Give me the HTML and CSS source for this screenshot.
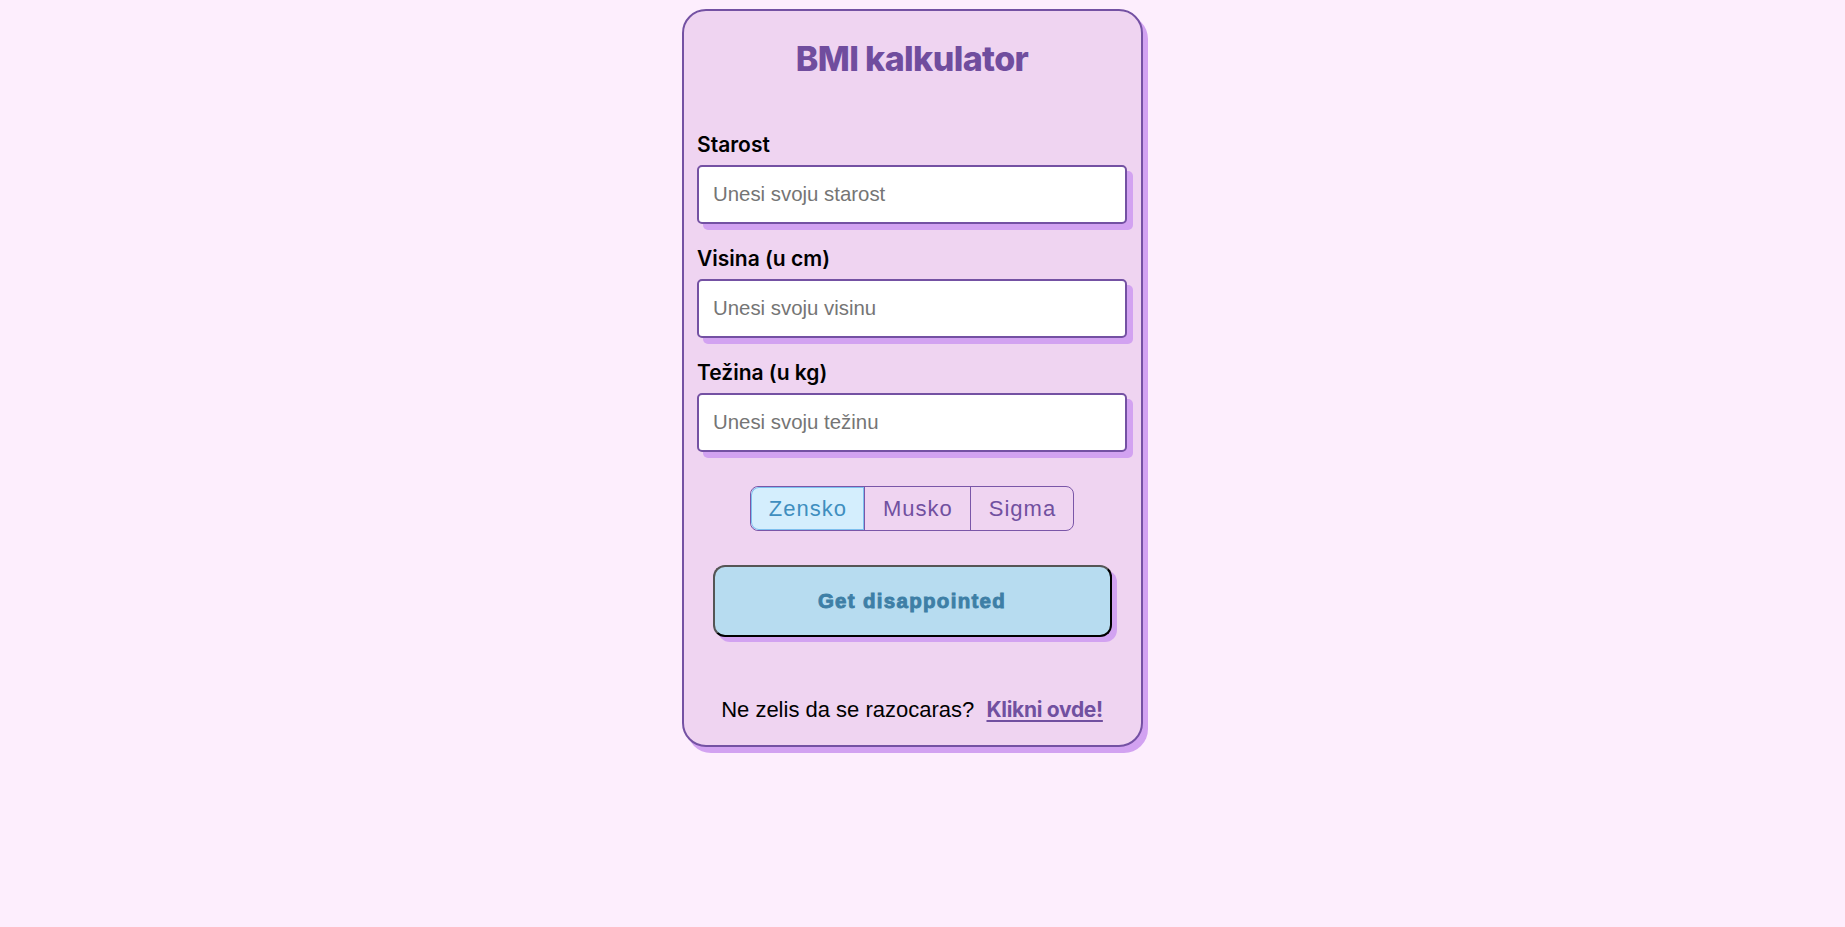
FILE: index.html
```html
<!DOCTYPE html>
<html lang="sr">
<head>
<meta charset="utf-8">
<title>BMI kalkulator</title>
<link rel="stylesheet" href="styles.css">
</head>
<body>
<main class="page">
  <section class="card">
    <h1 class="title">BMI kalkulator</h1>
    <form class="form">
      <div class="field">
        <label class="label" for="age">Starost</label>
        <input class="input" id="age" type="text" placeholder="Unesi svoju starost">
      </div>
      <div class="field">
        <label class="label" for="height">Visina (u cm)</label>
        <input class="input" id="height" type="text" placeholder="Unesi svoju visinu">
      </div>
      <div class="field field-last">
        <label class="label" for="weight">Težina (u kg)</label>
        <input class="input" id="weight" type="text" placeholder="Unesi svoju težinu">
      </div>
      <div class="toggle">
        <span class="seg seg-active">Zensko</span>
        <span class="seg">Musko</span>
        <span class="seg">Sigma</span>
      </div>
      <button class="btn" type="button">Get disappointed</button>
    </form>
    <p class="footer">Ne zelis da se razocaras?&nbsp; <a class="link" href="#">Klikni ovde!</a></p>
  </section>
</main>
</body>
</html>
```

FILE: styles.css
```css
html, body {
  margin: 0;
  padding: 0;
  background: #fdeefd;
}

.page {
  display: flex;
  justify-content: center;
  padding: 9px 20px 0 0;
  min-height: 927px;
  box-sizing: border-box;
}

.card {
  width: 461px;
  box-sizing: border-box;
  background: #efd4f1;
  border: 2px solid #7451a3;
  border-radius: 24px;
  box-shadow: 5px 6px 0 #d2a2f1;
  padding: 28px 14px 22px 13px;
  display: flex;
  flex-direction: column;
  align-self: flex-start;
}

.title {
  margin: 0;
  font-family: Inter, "Noto Sans", sans-serif;
  font-weight: 800;
  font-size: 34px;
  line-height: 40px;
  letter-spacing: -0.6px;
  color: #704d9e;
  text-align: center;
}

.form {
  display: flex;
  flex-direction: column;
  margin: 54px 0 0 0;
}

.field {
  display: flex;
  flex-direction: column;
  margin-bottom: 23px;
}

.field-last {
  margin-bottom: 0;
}

.label {
  font-family: Inter, "Noto Sans", sans-serif;
  font-weight: 600;
  font-size: 21px;
  line-height: 24px;
  color: #000;
  margin-bottom: 8px;
}

.input {
  height: 59px;
  box-sizing: border-box;
  width: 100%;
  border: 2px solid #7451a3;
  border-radius: 5px;
  background: #fff;
  box-shadow: 6px 6px 0 #d2a2f1;
  padding: 0 14px;
  font-family: "Liberation Sans", Arial, sans-serif;
  font-size: 20.4px;
  color: #000;
  outline: none;
}

.input::placeholder {
  color: #757575;
}

.toggle {
  display: flex;
  align-self: center;
  margin-top: 34px;
  border: 1px solid #7a56a8;
  border-radius: 8px;
  overflow: hidden;
}

.seg {
  font-family: "Liberation Sans", Arial, sans-serif;
  font-size: 22px;
  letter-spacing: 1px;
  line-height: 43px;
  padding: 0 17px 0 18px;
  color: #7150a0;
  border-left: 1px solid #7a56a8;
}

.seg:first-child {
  border-left: none;
}

.seg-active {
  background: #d4eefd;
  color: #3f8ebf;
  box-shadow: inset 0 0 0 1px #7dbfee;
  border-radius: 8px 0 0 8px;
}

.btn {
  align-self: center;
  margin-top: 34px;
  width: 399px;
  height: 72px;
  box-sizing: border-box;
  background: #b7dcf0;
  border: 2px solid;
  border-color: #555 #000 #000 #555;
  border-radius: 12px;
  box-shadow: 5px 5px 0 #d2a2f1;
  font-family: "Liberation Sans", Arial, sans-serif;
  font-weight: 700;
  font-size: 20.5px;
  letter-spacing: 1.3px;
  -webkit-text-stroke: 0.9px #3e7fa6;
  color: #3e7fa6;
  cursor: pointer;
}

.footer {
  margin: 60px 0 0 0;
  text-align: center;
  font-family: "Liberation Sans", Arial, sans-serif;
  font-size: 22px;
  line-height: 26px;
  color: #000;
}

.link {
  font-family: Inter, "Noto Sans", sans-serif;
  font-weight: 700;
  font-size: 21px;
  letter-spacing: -0.3px;
  color: #7150a0;
  text-decoration: underline;
  text-underline-offset: 3px;
}
```
